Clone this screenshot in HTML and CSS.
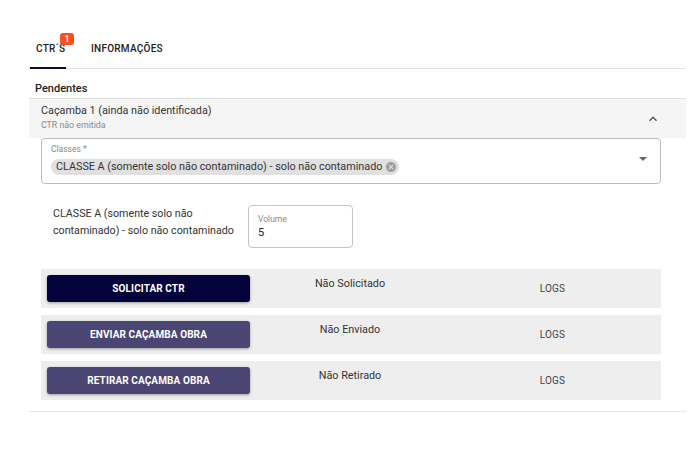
FILE: index.html
```html
<!DOCTYPE html>
<html lang="pt">
<head>
<meta charset="utf-8">
<link rel="stylesheet" href="styles.css">
</head>
<body>
<div class="page">
  <div class="tabs">
    <div class="tab active"><span class="tab-label">CTR´S<span class="badge">1</span></span></div>
    <div class="tab"><span class="tab-label">INFORMAÇÕES</span></div>
  </div>
  <div class="section-title">Pendentes</div>
  <div class="panel">
    <div class="panel-header">
      <div class="panel-titles">
        <div class="panel-title">Caçamba 1 (ainda não identificada)</div>
        <div class="panel-sub">CTR não emitida</div>
      </div>
      <svg class="chev" width="16" height="16" viewBox="0 0 24 24"><path d="M7.41 15.41L12 10.83l4.59 4.58L18 14l-6-6-6 6z" fill="#555"/></svg>
    </div>
    <div class="panel-body">
      <div class="select">
        <div class="select-main">
          <div class="field-label">Classes *</div>
          <div class="chip">CLASSE A (somente solo não contaminado) - solo não contaminado
            <svg class="chip-x" width="12" height="12" viewBox="0 0 24 24"><path d="M12 2C6.47 2 2 6.47 2 12s4.47 10 10 10 10-4.47 10-10S17.53 2 12 2zm5 13.59L15.590 17 12 13.41 8.41 17 7 15.59 10.59 12 7 8.41 8.41 7 12 10.59 15.59 7 17 8.41 13.41 12 17 15.59z" fill="#9e9e9e"/></svg>
          </div>
        </div>
        <svg class="caret" width="10" height="10" viewBox="0 0 10 10"><path d="M1 3h8L5 7z" fill="#666"/></svg>
      </div>
      <div class="volume-row">
        <div class="class-name">CLASSE A (somente solo não contaminado) - solo não contaminado</div>
        <div class="volume">
          <div class="field-label">Volume</div>
          <div class="volume-value">5</div>
        </div>
      </div>
      <div class="actions">
        <div class="action-row">
          <button class="btn btn-dark">SOLICITAR CTR</button>
          <div class="status">Não Solicitado</div>
          <div class="logs">LOGS</div>
        </div>
        <div class="action-row">
          <button class="btn">ENVIAR CAÇAMBA OBRA</button>
          <div class="status">Não Enviado</div>
          <div class="logs">LOGS</div>
        </div>
        <div class="action-row">
          <button class="btn">RETIRAR CAÇAMBA OBRA</button>
          <div class="status">Não Retirado</div>
          <div class="logs">LOGS</div>
        </div>
      </div>
    </div>
  </div>
</div>
</body>
</html>
```
FILE: styles.css
```css
* { box-sizing: border-box; }
html, body { margin: 0; padding: 0; background: #fff; }
body { font-family: Roboto, "Liberation Sans", Arial, sans-serif; color: #222; }
.page { margin-left: 29px; width: 657px; padding-top: 30px; }

.tabs { display: flex; height: 39px; border-bottom: 1px solid #e4e4e4; }
.tab { display: flex; align-items: center; justify-content: center; height: 38px; padding: 0 0 0 6px; margin-right: 19px; font-size: 10px; font-weight: 500; color: #222; letter-spacing: 0.25px; border-bottom: 2px solid transparent; }
.tab.active { border-bottom-color: #0a0a3c; height: 39px; margin-bottom: -1px; padding-right: 0; width: 36px; justify-content: flex-start; margin-left: 1px; }
.tab-label { position: relative; }
.badge { position: absolute; top: -10px; left: 24px; width: 14px; height: 12px; border-radius: 3px; background: #f4511e; color: #fff; font-size: 9px; font-weight: 500; display: flex; align-items: center; justify-content: center; letter-spacing: 0; }

.section-title { font-size: 11px; font-weight: 500; color: #222; padding: 13px 0 0 6px; height: 29px; }

.panel { border-top: 1px solid #e0e0e0; border-bottom: 1px solid #e6e6e6; padding-bottom: 11px; }
.panel-header { display: flex; align-items: flex-start; justify-content: space-between; background: #f5f5f5; height: 39px; padding: 5px 25px 0 12px; }
.panel-title { font-size: 10.8px; color: #333; }
.panel-sub { font-size: 8.8px; color: #8a8a8a; margin-top: 3px; }
.chev { margin-top: 7px; }

.panel-body { padding: 0 25px 0 12px; }
.select { display: flex; align-items: center; justify-content: space-between; height: 46px; border: 1px solid #bdbdbd; border-radius: 4px; padding: 0 12px 0 9px; }
.field-label { font-size: 8.5px; color: #8a8a8a; }
.select-main { margin-top: -3px; }
.select .field-label { margin-bottom: 1px; }
.chip { display: inline-flex; align-items: center; gap: 3px; height: 16px; padding: 0 2px 0 5px; border-radius: 8px; background: #e0e0e0; font-size: 10.8px; color: #333; }
.chip-x { flex: none; }
.caret { margin-top: -5px; }

.volume-row { display: flex; align-items: flex-start; height: 85px; padding: 21px 0 0 12px; }
.class-name { width: 195px; font-size: 10.7px; line-height: 17px; color: #333; padding-top: 0; }
.volume { width: 105px; height: 43px; border: 1px solid #c4c4c4; border-radius: 4px; padding: 8px 9px 0 9px; }
.volume .field-label { margin-bottom: 2px; }
.volume-value { font-size: 11px; color: #222; }

.actions { display: flex; flex-direction: column; gap: 7px; }
.action-row { display: grid; grid-template-columns: 203px 200px 1fr; align-items: center; height: 39px; background: #eeeeee; padding: 0 6px; }
.btn { height: 27px; border: none; border-radius: 3px; background: #4a4572; color: #fff; font-family: Roboto, "Liberation Sans", Arial, sans-serif; font-size: 10px; font-weight: 700; letter-spacing: 0.1px; box-shadow: 0 1px 3px rgba(0,0,0,0.35); padding: 0; }
.btn-dark { background: #03023a; }
.status { align-self: start; text-align: center; font-size: 10.8px; color: #333; padding-top: 8px; }
.logs { text-align: center; font-size: 10px; color: #444; letter-spacing: 0.2px; }
```
